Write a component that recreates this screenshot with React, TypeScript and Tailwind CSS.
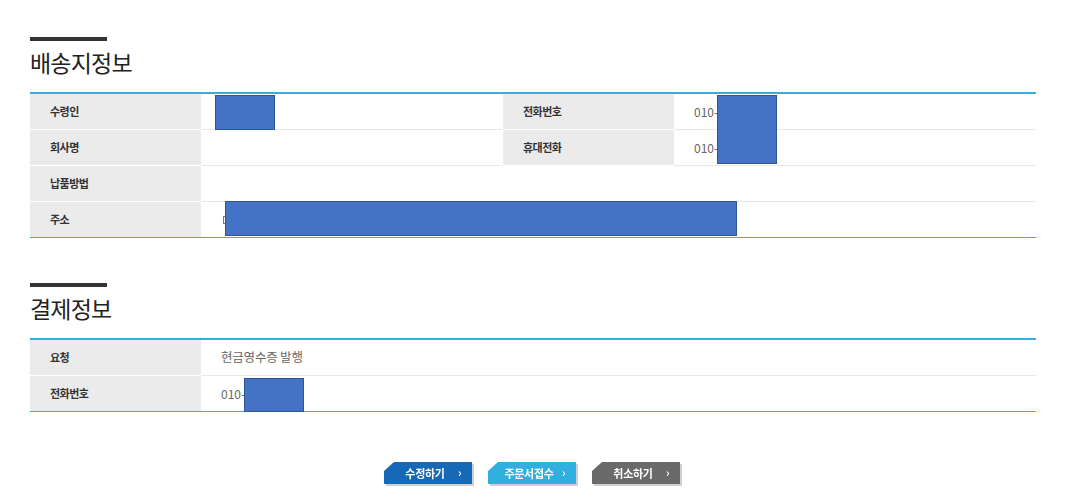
import React from "react";

const font = { fontFamily: '"Noto Sans CJK KR", "Noto Sans", sans-serif' };

function Redact({ className }: { className: string }) {
  return <div className={`absolute bg-[#4472c4] border border-[#2f5597] ${className}`} />;
}

function Label({ children, last }: { children?: React.ReactNode; last?: boolean }) {
  return (
    <div
      className={`w-[171px] shrink-0 bg-[#ebebeb] pl-5 flex items-center h-[36px] text-[11px] font-bold text-[#333] tracking-[-0.5px] ${
        last ? "border-b border-[#3aaed8]" : "border-b border-white"
      }`}
    >
      {children}
    </div>
  );
}

function Value({ children, w, last }: { children?: React.ReactNode; w: string; last?: boolean }) {
  return (
    <div
      className={`${w} pl-5 flex items-center h-[36px] text-[12px] text-[#666] ${
        last ? "border-b border-[#3aaed8]" : "border-b border-[#e8e8e8]"
      }`}
    >
      {children}
    </div>
  );
}

function Heading({ title }: { title: string }) {
  return (
    <div>
      <div className="h-[4px] w-[77px] bg-[#333333]" />
      <div className="mt-[7px] h-[28px] leading-[28px] text-[23px] text-[#222] tracking-[-0.8px] mb-[16px]">
        {title}
      </div>
    </div>
  );
}

function Btn({ label, color }: { label: string; color: string }) {
  return (
    <div className="[filter:drop-shadow(2px_2px_0_#cfcfcf)]">
      <div
        className={`relative w-[88px] h-[22px] ${color} flex items-center text-white text-[11px] font-bold tracking-[-0.3px] [clip-path:polygon(10px_0,100%_0,100%_100%,0_100%,0_9px)]`}
      >
        <span className="w-[82px] flex justify-center">{label}</span>
        <span className="absolute left-[74px] top-[2px] text-[11px] font-bold">›</span>
      </div>
    </div>
  );
}

export default function App() {
  return (
    <div className="w-[1065px] h-[504px] bg-white overflow-hidden" style={font}>
      <div className="pl-[30px] pt-[37px] w-[1036px]">
        <Heading title="배송지정보" />
        <div className="relative border-t-2 border-[#33afd9]">
          <div className="flex">
            <Label>수령인</Label>
            <Value w="w-[302px]" />
            <Label>전화번호</Label>
            <Value w="w-[362px]">010-</Value>
          </div>
          <div className="flex">
            <Label>회사명</Label>
            <Value w="w-[302px]" />
            <Label>휴대전화</Label>
            <Value w="w-[362px]">010-</Value>
          </div>
          <div className="flex">
            <Label>납품방법</Label>
            <Value w="flex-1" />
          </div>
          <div className="flex">
            <Label last>주소</Label>
            <Value w="flex-1" last>
              <span className="inline-block w-[5px] h-[8px] border border-[#777] ml-[2px]" />
            </Value>
          </div>
          <Redact className="left-[185px] top-[1px] w-[60px] h-[35px]" />
          <Redact className="left-[687px] top-[1px] w-[60px] h-[69px]" />
          <Redact className="left-[195px] top-[107px] w-[512px] h-[35px]" />
        </div>

        <div className="mt-[45px]">
          <Heading title="결제정보" />
        </div>
        <div className="relative border-t-2 border-[#33afd9]">
          <div className="flex">
            <Label>요청</Label>
            <Value w="flex-1">
              <span className="text-[12.5px] tracking-[-0.2px]">현금영수증 발행</span>
            </Value>
          </div>
          <div className="flex">
            <Label last>전화번호</Label>
            <Value w="flex-1" last>
              010-
            </Value>
          </div>
          <Redact className="left-[214px] top-[38px] w-[60px] h-[34px]" />
        </div>

        <div className="mt-[50px] flex justify-center gap-[16px] pr-[2px]">
          <Btn label="수정하기" color="bg-[#1569b5]" />
          <Btn label="주문서접수" color="bg-[#2fb0de]" />
          <Btn label="취소하기" color="bg-[#6a6a6a]" />
        </div>
      </div>
    </div>
  );
}
